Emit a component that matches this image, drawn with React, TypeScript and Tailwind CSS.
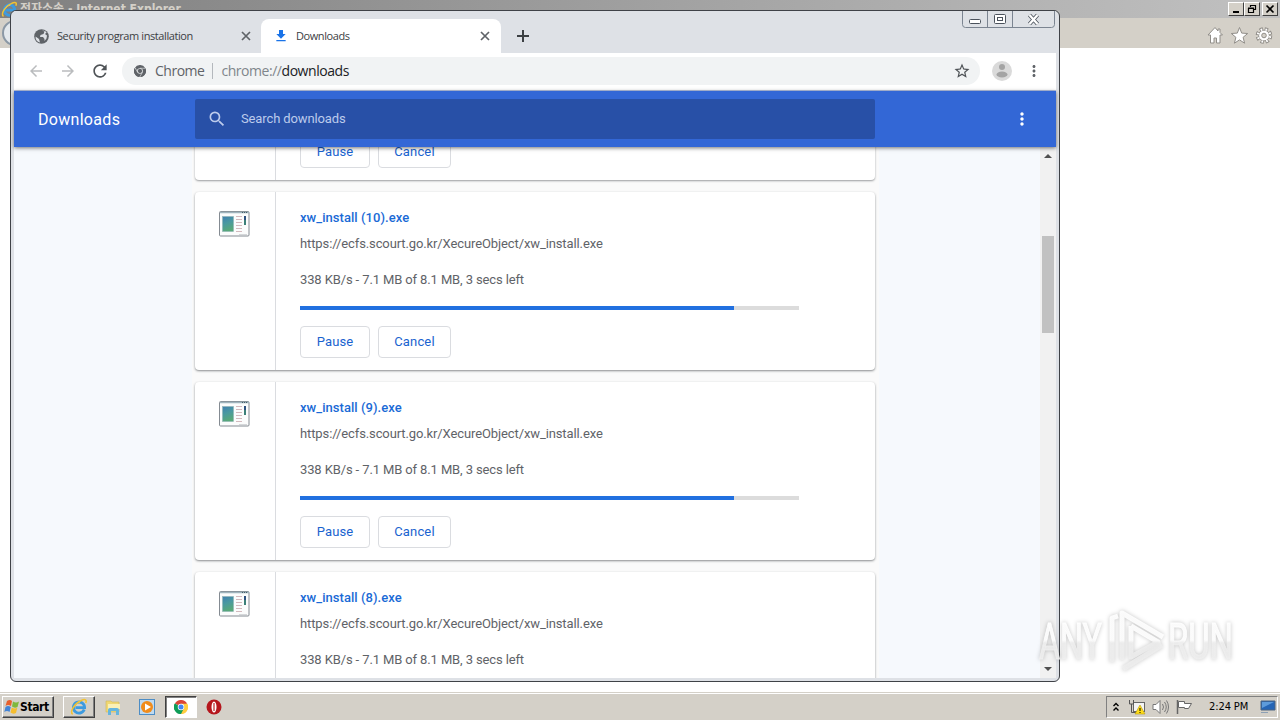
import React from 'react';
import {
  MdArrowBack,
  MdArrowForward,
  MdFileDownload,
  MdMoreVert,
  MdRefresh,
  MdSearch,
  MdStarBorder,
} from 'react-icons/md';

const DOWNLOADS = [
  { id: 10, name: 'xw_install (10).exe', showButtons: true },
  { id: 9, name: 'xw_install (9).exe', showButtons: true },
  { id: 8, name: 'xw_install (8).exe', showButtons: false },
];

const URL = 'https://ecfs.scourt.go.kr/XecureObject/xw_install.exe';
const PROGRESS = 87;

function IeIcon({ size }: { size: number }) {
  return (
    <svg width={size} height={size} viewBox="0 0 20 20" fill="none" className="shrink-0">
      <path d="M15.800 12.800A6.200 6.200 0 1 1 16.200 10.700H6" stroke="#3d9be0" strokeWidth="3.200" />
      <path d="M5.500 8.500Q7 4.500 11 5" stroke="#8fd0f7" strokeWidth="1" />
      <path d="M3 18C-1 16 5 6 12 3c5-2.400 7-1 5.500 2.500" stroke="#f2c233" strokeWidth="1.700" />
    </svg>
  );
}

function GlobeIcon() {
  return (
    <svg width="15" height="15" viewBox="0 0 15 15" className="shrink-0">
      <circle cx="7.500" cy="7.500" r="7.300" fill="#5f6368" />
      <path d="M1.500 7.500 5 10l1 3.500Q1.500 12.500 1.500 7.500zM8 1.500l2.500 1-1 2.500-3 1-.5 2h3l1.500 2v2l2-2.500.5-3-2-1.500 1.500-1.500Q12 2 8 1.500z" fill="#dee1e6" />
    </svg>
  );
}

function CloseIcon() {
  return (
    <svg width="10" height="10" viewBox="0 0 10 10" fill="none" stroke="#5f6368" strokeWidth="1.700" className="shrink-0">
      <path d="m1 1 8 8m0-8-8 8" />
    </svg>
  );
}

function ChromeIcon({ mono = false, size }: { mono?: boolean; size: number }) {
  const c = mono ? ['#5f6368', '#5f6368', '#5f6368', '#5f6368'] : ['#db4437', '#ffcd40', '#0f9d58', '#4285f4'];
  const ring = mono ? '#f1f3f4' : '#fff';
  return (
    <svg width={size} height={size} viewBox="0 0 24 24" className="shrink-0">
      <path d="M12 12 1.600 6A12 12 0 0 1 22.400 6z" fill={c[0]} />
      <path d="M12 12 22.400 6A12 12 0 0 1 12 24z" fill={c[1]} />
      <path d="M12 12V24A12 12 0 0 1 1.600 6z" fill={c[2]} />
      <path d="M12 6.500H22.600A12 12 0 0 1 12 24l4.800-9.300z" fill={c[1]} />
      <path d="M7.200 14.700 1.600 6A12 12 0 0 0 12 24l4.800-9.300z" fill={c[2]} />
      <circle cx="12" cy="12" r="5.600" fill={ring} />
      <circle cx="12" cy="12" r="4.300" fill={c[3]} />
      {mono && <path d="M12 6.500H22.800M7.200 14.700 2 5.500M16.800 14.700 11.500 24" stroke={ring} strokeWidth="1.200" />}
    </svg>
  );
}

function ExeIcon() {
  return (
    <svg width="31" height="26" viewBox="0 0 31 26" className="block">
      <defs>
        <linearGradient id="exe" x1="0" y1="0" x2="0.300" y2="1">
          <stop offset="0" stopColor="#3f7fb0" />
          <stop offset="0.500" stopColor="#4a99a0" />
          <stop offset="1" stopColor="#58a878" />
        </linearGradient>
      </defs>
      <rect x="0.500" y="0.500" width="29.500" height="24.500" rx="1" fill="#fbfcfc" stroke="#848b92" />
      <path d="M1 1.500h29" stroke="#9fb4bd" strokeWidth="1.500" />
      <path d="M23 1.500h5" stroke="#47606c" strokeWidth="1" strokeDasharray="1 1" />
      <rect x="3.500" y="5.500" width="11" height="15" fill="url(#exe)" stroke="#8fb5b5" strokeWidth="0.600" />
      <path d="M17 5.500h6M17 8.500h6M17 11.500h6M17 14.500h6M17 17.500h6M17 20.500h6" stroke="#d3b9bd" />
      <rect x="25" y="5" width="2" height="9" fill="#3b8078" />
      <path d="M26 5v4" stroke="#2c4f7d" strokeWidth="2" />
      <path d="M20 23.500h8" stroke="#d5d8da" />
    </svg>
  );
}

function IeWindow() {
  return (
    <div className="flex h-[692px] flex-col bg-white">
      <div className="flex h-[18px] items-center bg-linear-to-r from-[#808080] to-[#c1c1c1] pl-px">
        <IeIcon size={17} />
        <span className="ml-[2px] whitespace-nowrap font-['DejaVu_Sans_Condensed','Noto_Sans_CJK_KR',sans-serif] text-[12px] font-bold leading-[18px] text-[#d4d0c8]">
          전자소송 - Internet Explorer
        </span>
        <div className="ml-auto flex pr-[2px]">
          {['min', 'restore', 'close'].map(kind => (
            <div
              key={kind}
              className={`flex h-[14px] w-4 items-center justify-center border border-t-white border-l-white border-r-[#404040] border-b-[#404040] bg-[#d4d0c8] ${kind === 'close' ? 'ml-[2px]' : ''}`}
            >
              <svg width="12" height="10" viewBox="0 0 12 10" fill="none" stroke="#000" className="shrink-0">
                {kind === 'min' && <path d="M3 8h6" strokeWidth="2" />}
                {kind === 'restore' && <path d="M4.500 3V1.500h5v4H8M2.500 4.500h5v4h-5zM4 1.500h6M2 4h6" strokeWidth="1.200" />}
                {kind === 'close' && <path d="m2.500 1.500 7 7m0-7-7 7" strokeWidth="1.700" />}
              </svg>
            </div>
          ))}
        </div>
      </div>
      <div className="flex h-[30px] items-center justify-between bg-[#d4d0c8]">
        <div className="ml-[2px] h-[26px] w-[26px] rounded-full border-2 border-[#8b98a5] bg-[#e3e8ec]" />
        <svg width="70" height="20" viewBox="0 0 70 20" className="mr-1 mt-[5px]" fill="#fff" stroke="#918e89">
          <path d="m9 1.500-7 7.500h2.500v8h3.500v-5h2.500v5H14V9h2.500L14 6.500V3h-2v2z" />
          <path d="m33.500 1.500 2.200 5.600 6 .4-4.600 3.800 1.500 5.900-5.100-3.300-5.100 3.300 1.500-5.900-4.600-3.800 6-.4z" />
          <circle cx="58" cy="9.500" r="6.500" fill="none" strokeWidth="3.600" strokeDasharray="3.200 1.905" />
          <circle cx="58" cy="9.500" r="5.400" />
          <circle cx="58" cy="9.500" r="6.200" fill="none" stroke="#fff" strokeWidth="2.200" strokeDasharray="1.600 3.270" strokeDashoffset="-0.750" />
          <circle cx="58" cy="9.500" r="2.300" fill="#d4d0c8" />
        </svg>
      </div>
    </div>
  );
}

function WindowButtons() {
  return (
    <svg width="93" height="18" viewBox="0 0 93 18" className="absolute right-[4px] top-0" fill="none" stroke="#7b8491">
      <path d="M.5 0v13.500q0 3 3 3h86q3 0 3-3V0M25.500 0v16.500M50.500 0v16.500" />
      <g stroke="#4b525c">
        <rect x="7.500" y="8.500" width="11" height="4" rx="1" fill="#fff" />
        <rect x="32.500" y="3.500" width="11" height="9" rx="1" fill="#fff" />
        <rect x="35.500" y="6.500" width="5" height="3" />
      </g>
      <path d="m67.500 4 8 9m0-9-8 9" stroke="#4b525c" strokeWidth="4" />
      <path d="m67.500 4 8 9m0-9-8 9" stroke="#fff" strokeWidth="2.400" />
    </svg>
  );
}

function TabStrip() {
  return (
    <div className="flex h-[42px] items-end bg-[#dee1e6] font-['Open_Sans',sans-serif] text-[11px] text-[#3c4043]">
      <div className="flex h-[34px] w-[247px] items-center justify-between pl-5 pr-[10px]">
        <div className="flex items-center gap-[8px]">
          <GlobeIcon />
          <span className="whitespace-nowrap tracking-[-0.41px]">Security program installation</span>
        </div>
        <CloseIcon />
      </div>
      <div className="flex h-[34px] w-[240px] items-center justify-between rounded-t-lg bg-white pl-3 pr-[11px]">
        <div className="flex items-center gap-[7px]">
          <MdFileDownload className="h-4 w-4 text-[#1a73e8]" />
          <span className="tracking-[-0.42px]">Downloads</span>
        </div>
        <CloseIcon />
      </div>
      <svg width="12" height="12" viewBox="0 0 12 12" className="mb-[11px] ml-4" stroke="#3c4043" strokeWidth="2">
        <path d="M6 0v12M0 6h12" />
      </svg>
    </div>
  );
}

function Toolbar() {
  return (
    <div className="flex h-[38px] items-center border-b border-[#b9c6e6] bg-white pb-px pl-[13px]">
      <MdArrowBack className="h-[18px] w-[18px] text-[#babcbe]" />
      <MdArrowForward className="ml-[14px] h-[18px] w-[18px] text-[#babcbe]" />
      <MdRefresh className="ml-[13px] h-5 w-5 text-[#4f5357]" />
      <div className="ml-3 flex h-7 w-[858px] items-center rounded-full bg-[#f1f3f4] pl-3 font-['Open_Sans',sans-serif] text-[14px]">
        <ChromeIcon mono size={12} />
        <span className="-mt-px ml-[9px] tracking-[-0.5px] text-[#5f6368]">Chrome</span>
        <span className="ml-[8px] h-4 w-px bg-[#b4b8bd]" />
        <span className="-mt-px ml-2 tracking-[-0.45px] text-[#80868b]">
          chrome://<span className="text-[#202124]">downloads</span>
        </span>
        <MdStarBorder className="ml-auto mr-[9px] h-[18px] w-[18px] text-[#4f5357]" />
      </div>
      <svg width="20" height="20" viewBox="0 0 20 20" className="ml-[12px]">
        <circle cx="10" cy="10" r="10" fill="#dadada" />
        <circle cx="10" cy="6" r="3" fill="#a4a4a4" />
        <ellipse cx="10" cy="13.500" rx="5.500" ry="3" fill="#a4a4a4" />
      </svg>
      <MdMoreVert className="ml-[13px] h-[18px] w-[18px] text-[#5f6368]" />
    </div>
  );
}

function PageHeader() {
  return (
    <div className="relative z-10 flex h-14 items-center bg-[#3367d6] font-['Roboto',sans-serif] shadow-[0_1px_4px_rgba(0,0,0,0.55)]">
      <h1 className="w-[181px] pl-6 pt-[2px] text-base tracking-[0.3px] text-white">Downloads</h1>
      <div className="flex h-10 w-[680px] items-center rounded-[2px] bg-[#2850a7] pl-3 text-[13px] text-[#bccbec]">
        <MdSearch className="h-5 w-5" />
        <span className="ml-[14px] tracking-[-0.12px]">Search downloads</span>
      </div>
      <MdMoreVert className="ml-[137px] h-5 w-5 text-white" />
    </div>
  );
}

function CardButtons() {
  return (
    <div className="flex gap-2 text-[13px] leading-4 tracking-[0.15px] text-[#1a63cf]">
      <button className="h-8 w-[70px] rounded-[4px] border border-[#dadce0]">Pause</button>
      <button className="h-8 w-[73px] rounded-[4px] border border-[#dadce0]">Cancel</button>
    </div>
  );
}

function DownloadCard({ name, showButtons }: { name: string; showButtons: boolean }) {
  return (
    <div className="flex h-[178px] w-[680px] shrink-0 rounded-[4px] bg-white shadow-[0_1px_2px_rgba(60,64,67,0.5),0_1px_3px_rgba(60,64,67,0.12)]">
      <div className="w-[81px] border-r border-[#dadce0] pl-6 pt-[19px]">
        <ExeIcon />
      </div>
      <div className="flex flex-col pl-6 pt-[18px] text-[13px] leading-4">
        <a className="font-medium tracking-[0.05px] text-[#1a6ad6]">{name}</a>
        <span className="mt-[10px] tracking-[-0.11px] text-[#5f6368]">{URL}</span>
        <span className="mt-5 tracking-[-0.12px] text-[#5f6368]">338 KB/s - 7.1 MB of 8.1 MB, 3 secs left</span>
        <div className="mb-4 mt-[18px] h-1 w-[499px] bg-[#dcdcdc]">
          <div className="h-full bg-[#2170e0]" style={{ width: `${PROGRESS}%` }} />
        </div>
        {showButtons && <CardButtons />}
      </div>
    </div>
  );
}

function DownloadsPage() {
  return (
    <div className="flex h-[531px] overflow-hidden bg-[#f6f9fd] font-['Roboto',sans-serif]">
      <div className="ml-[178px] flex h-full w-[687px] flex-col gap-3 overflow-hidden bg-[#fafafa] pl-[3px]">
        {/* Tail of the card scrolled under the header */}
        <div className="-mt-[12px] flex h-[45px] w-[680px] shrink-0 rounded-b-[4px] bg-white shadow-[0_1px_2px_rgba(60,64,67,0.5)]">
          <div className="w-[81px] border-r border-[#dadce0]" />
          <div className="pl-6 pt-px">
            <CardButtons />
          </div>
        </div>
        {DOWNLOADS.map(item => (
          <DownloadCard key={item.id} name={item.name} showButtons={item.showButtons} />
        ))}
      </div>
      <div className="ml-auto flex w-4 flex-col items-center bg-[#f1f1f1]">
        <span className="mt-[7px] border-x-4 border-b-4 border-x-transparent border-b-[#505050]" />
        <span className="mt-[78px] h-[97px] w-3 bg-[#c1c1c1]" />
        <span className="mb-[7px] mt-auto border-x-4 border-t-4 border-x-transparent border-t-[#505050]" />
      </div>
    </div>
  );
}

function Watermark() {
  return (
    <svg
      width="210"
      height="80"
      viewBox="0 0 210 80"
      className="absolute left-[1030px] top-[600px] drop-shadow-[0_0_2px_rgba(0,0,0,0.25)]"
    >
      <defs>
        <linearGradient id="wm" gradientUnits="userSpaceOnUse" x1="0" y1="10" x2="0" y2="70">
          <stop offset="0.5" stopColor="#fff" stopOpacity="0.9" />
          <stop offset="0.55" stopColor="#efefef" stopOpacity="0.85" />
        </linearGradient>
      </defs>
      <g fill="url(#wm)" stroke="url(#wm)" strokeWidth="1" className="font-['Roboto',sans-serif] text-[50px]">
        <text x="9" y="59" textLength="63" lengthAdjust="spacingAndGlyphs">ANY</text>
        <text x="138" y="59" textLength="65" lengthAdjust="spacingAndGlyphs">RUN</text>
      </g>
      <g fill="none" stroke="url(#wm)" strokeWidth="5" strokeLinejoin="round">
        <path d="M82 62V18l6-2M92 60V13l41 24" />
        <path d="M101 26v31l27-15L101 26M93 69l39-24" />
      </g>
    </svg>
  );
}

function Taskbar() {
  return (
    <div className="flex h-7 items-center border-t border-[#d4d0c8] bg-[#d4d0c8] pl-[2px] pt-px font-['DejaVu_Sans_Condensed',sans-serif] shadow-[inset_0_1px_0_#fff]">
      <button className="flex h-[22px] w-[52px] items-center border border-t-white border-l-white border-r-[#404040] border-b-[#404040] shadow-[inset_-1px_-1px_0_#808080]">
        <svg width="16" height="16" viewBox="0 0 16 16" className="ml-px shrink-0">
          <path d="M3 2q3-2 5 0L7 7Q4 5 1.500 7z" fill="#e8602c" />
          <path d="M9 2.500q3 2 6 0L13.500 8q-3 1.500-5.500-.5z" fill="#7fb83d" />
          <path d="M1.500 8Q4 6 6.800 8L5.500 13Q3 11 .3 13z" fill="#4384d6" />
          <path d="M7.800 8.500q3 2 5.500.3L12 14q-3 1.500-5.500-.5z" fill="#f5bd2d" />
        </svg>
        <span className="text-[12px] font-bold tracking-[-0.4px] text-black">Start</span>
      </button>
      <div className="ml-[9px] flex h-[22px] w-8 items-center justify-center border border-t-white border-l-white border-r-[#404040] border-b-[#404040] shadow-[inset_-1px_-1px_0_#808080]">
        <IeIcon size={18} />
      </div>
      <svg width="18" height="18" viewBox="0 0 18 18" className="ml-[9px]">
        <path d="M2 3h5l1 1h7v10H2z" fill="#f0d873" stroke="#ccb65a" strokeWidth="0.600" />
        <path d="M4 6h12v5H4z" fill="#faf0b6" />
        <path d="M4 17v-5q0-2 2-2h7q2 0 2 2v5h-3v-4H7v4z" fill="#65b5de" />
      </svg>
      <svg width="17" height="17" viewBox="0 0 17 17" className="ml-[17px]">
        <rect x="0.500" y="0.500" width="15" height="15" fill="#bfdaf0" stroke="#4d8dc5" />
        <circle cx="8" cy="8" r="6" fill="#f18c1b" />
        <path d="m6 4.500 6 3.500-6 3.500z" fill="#fff" />
      </svg>
      <div className="ml-[9px] flex h-[22px] w-8 items-center justify-center border border-t-[#404040] border-l-[#404040] border-r-white border-b-white bg-white shadow-[inset_1px_1px_0_#808080]">
        <ChromeIcon size={14} />
      </div>
      <svg width="16" height="16" viewBox="0 0 16 16" className="ml-[9px]">
        <circle cx="8" cy="8" r="7.500" fill="#b5161d" />
        <ellipse cx="8" cy="8" rx="2.500" ry="5.500" fill="#fff" />
        <path d="M8 4v8" stroke="#bc2228" strokeWidth="1.200" />
      </svg>
      <div className="ml-auto mr-[2px] flex h-[22px] w-[172px] items-center border border-t-[#808080] border-l-[#808080] border-r-white border-b-white pl-[6px]">
        <svg width="6" height="10" viewBox="0 0 6 10" fill="none" stroke="#000" strokeWidth="1.400">
          <path d="m.5 4 2.500-2.500L5.500 4m-5 4.500L3 6l2.500 2.500" />
        </svg>
        <svg width="18" height="16" viewBox="0 0 18 16" className="ml-[9px]">
          <rect x="5.500" y="3.500" width="11" height="9" fill="#f4f4f4" stroke="#666" />
          <path d="M1.500 1v4h4V1M3.500 5v8.500h5" fill="none" stroke="#555" />
          <path d="m12 6 5 9H7z" fill="#ffdc18" stroke="#b59a10" strokeWidth="0.600" />
          <path d="M12 9v3m0 1v1" stroke="#000" />
        </svg>
        <svg width="17" height="16" viewBox="0 0 17 16" className="ml-[6px]" fill="none" stroke="#777">
          <path d="M1 5.500h3l4-4v13l-4-4H1z" fill="#fff" />
          <path d="M10.500 5q2 3 0 6M12.500 3q3.500 5 0 10M14.500 1.500q4 6.500 0 13" />
        </svg>
        <svg width="17" height="16" viewBox="0 0 17 16" className="ml-[7px]" fill="#fff" stroke="#666">
          <path d="M1.500 1v14" strokeWidth="1.500" />
          <path d="M2.500 2.500h6v2h7l-3 5h-4v-1h-6z" />
        </svg>
        <span className="ml-[16px] whitespace-nowrap text-[11px] tracking-[-0.1px] text-black">2:24 PM</span>
        <svg width="16" height="14" viewBox="0 0 16 14" className="ml-auto mr-px">
          <path d="M1 1h14v9H1z" fill="#2565b5" stroke="#4d6580" />
          <path d="M2 2h12L2 8z" fill="#5d9bdb" />
          <path d="M1 12.500h7" stroke="#8da0b4" />
        </svg>
      </div>
    </div>
  );
}

export default function App() {
  return (
    <div className="relative h-[720px] w-[1280px] overflow-hidden">
      <IeWindow />
      <Taskbar />
      {/* Chrome window floating over the desktop */}
      <div className="absolute left-[10px] top-[10px] h-[672px] w-[1050px] overflow-hidden rounded-[6px] border border-[#3f4247] bg-[#dee1e6] px-[3px]">
        <TabStrip />
        <Toolbar />
        <PageHeader />
        <DownloadsPage />
        <WindowButtons />
      </div>
      <Watermark />
    </div>
  );
}
